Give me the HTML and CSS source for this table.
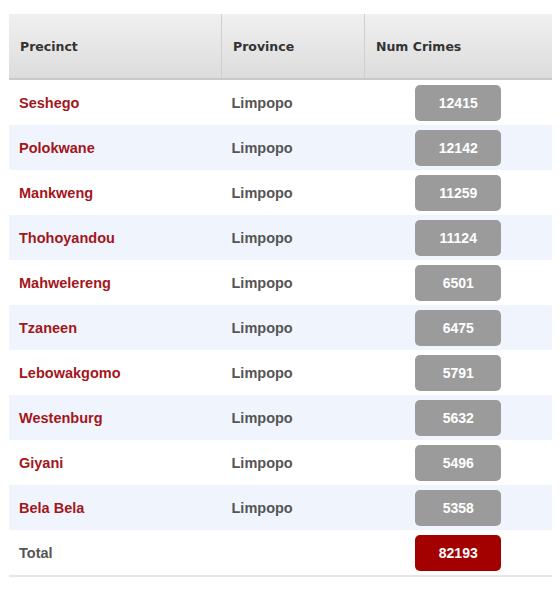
FILE: index.html
```html
<!DOCTYPE html>
<html>
<head>
<meta charset="utf-8">
<link rel="stylesheet" href="styles.css">
</head>
<body>
<div class="wrap">
<table class="crimes">
  <thead>
    <tr>
      <th class="c1">Precinct</th>
      <th class="c2">Province</th>
      <th class="c3">Num Crimes</th>
    </tr>
  </thead>
  <tbody>
    <tr><td class="name">Seshego</td><td class="prov">Limpopo</td><td class="num"><span class="badge">12415</span></td></tr>
    <tr class="alt"><td class="name">Polokwane</td><td class="prov">Limpopo</td><td class="num"><span class="badge">12142</span></td></tr>
    <tr><td class="name">Mankweng</td><td class="prov">Limpopo</td><td class="num"><span class="badge">11259</span></td></tr>
    <tr class="alt"><td class="name">Thohoyandou</td><td class="prov">Limpopo</td><td class="num"><span class="badge">11124</span></td></tr>
    <tr><td class="name">Mahwelereng</td><td class="prov">Limpopo</td><td class="num"><span class="badge">6501</span></td></tr>
    <tr class="alt"><td class="name">Tzaneen</td><td class="prov">Limpopo</td><td class="num"><span class="badge">6475</span></td></tr>
    <tr><td class="name">Lebowakgomo</td><td class="prov">Limpopo</td><td class="num"><span class="badge">5791</span></td></tr>
    <tr class="alt"><td class="name">Westenburg</td><td class="prov">Limpopo</td><td class="num"><span class="badge">5632</span></td></tr>
    <tr><td class="name">Giyani</td><td class="prov">Limpopo</td><td class="num"><span class="badge">5496</span></td></tr>
    <tr class="alt"><td class="name">Bela Bela</td><td class="prov">Limpopo</td><td class="num"><span class="badge">5358</span></td></tr>
    <tr class="total"><td class="tlabel">Total</td><td></td><td class="num"><span class="badge red">82193</span></td></tr>
  </tbody>
</table>
</div>
</body>
</html>
```
FILE: styles.css
```css
html, body {
  margin: 0;
  padding: 0;
  background: #ffffff;
}
.wrap {
  padding: 14px 8px 0 9px;
}
.crimes {
  width: 543px;
  border-collapse: collapse;
  border-spacing: 0;
  font-family: "Liberation Sans", Arial, sans-serif;
  table-layout: fixed;
}
.crimes th {
  height: 64px;
  padding: 0 0 0 11px;
  text-align: left;
  font-family: "DejaVu Sans", Verdana, sans-serif;
  font-weight: bold;
  font-size: 12.5px;
  color: #333333;
  background: linear-gradient(#f0f0f0, #dcdcdc);
  border-bottom: 2px solid #c9c9c9;
  border-left: 1px solid #ffffff;
  border-right: 1px solid #cfcfcf;
}
.crimes th.c1 { width: 201px; border-left: none; }
.crimes th.c2 { width: 131px; }
.crimes th.c3 { border-right: none; }
.crimes td {
  height: 45px;
  padding: 0 0 0 10px;
  font-size: 14.5px;
  font-weight: bold;
}
.crimes tr.alt td {
  background: #f0f5fd;
}
.name { color: #a3161b; }
.prov { color: #555555; }
.tlabel { color: #555555; }
.crimes td.num {
  padding: 0;
  text-align: center;
}
.crimes tr.total td {
  border-bottom: 2px solid #e6e6e6;
}
.badge {
  display: inline-block;
  width: 86px;
  height: 36px;
  line-height: 36px;
  border-radius: 5px;
  background: #9b9b9b;
  color: #ffffff;
  font-size: 14px;
  font-weight: bold;
  text-align: center;
  vertical-align: middle;
  box-sizing: border-box;
}
.badge.red {
  background: #a30000;
}
```
